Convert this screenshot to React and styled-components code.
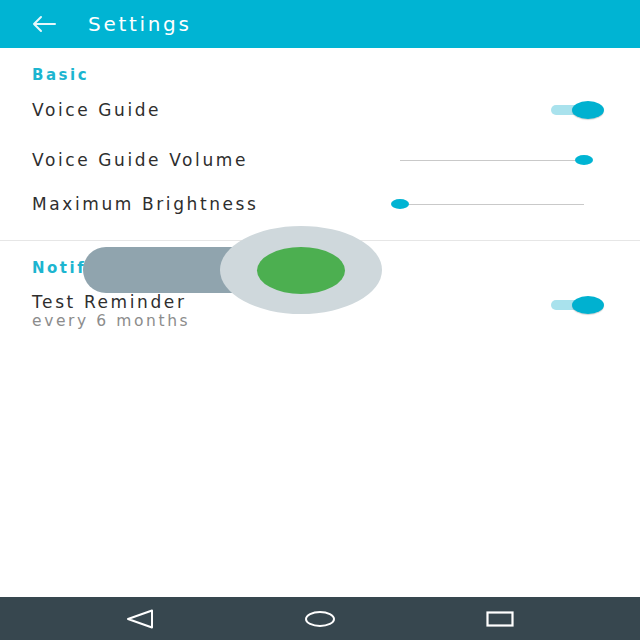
import React from 'react';
import styled, { createGlobalStyle } from 'styled-components';

const GlobalStyle = createGlobalStyle`
    html, body {
        margin: 0;
        padding: 0;
        background: #ffffff;
    }
    body {
        font-family: "DejaVu Sans", "Open Sans", sans-serif;
    }
`;

const CYAN = '#00b4d3';

const App = () => {
    return (
        <Screen>
            <GlobalStyle />
            <AppBar>
                <BackButton aria-label="back">
                    <svg width="26" height="18" viewBox="0 0 26 18">
                        <path d="M24 9H3M10 2L3 9l7 7" fill="none" stroke="#e6f7fb" strokeWidth="2" strokeLinecap="round" strokeLinejoin="round" />
                    </svg>
                </BackButton>
                <Title>Settings</Title>
            </AppBar>

            <Content>
                <Section>
                    <SectionTitle>Basic</SectionTitle>
                    <Row height={48}>
                        <Label>Voice Guide</Label>
                        <Toggle />
                    </Row>
                    <Row height={52}>
                        <Label>Voice Guide Volume</Label>
                        <Slider value={1} />
                    </Row>
                    <Row height={36}>
                        <Label>Maximum Brightness</Label>
                        <Slider value={0} />
                    </Row>
                </Section>

                <Divider />

                <Section>
                    <SectionTitle>Notifications</SectionTitle>
                    <Row height={52}>
                        <TextBlock>
                            <Label>Test Reminder</Label>
                            <SubLabel>every 6 months</SubLabel>
                        </TextBlock>
                        <Toggle />
                    </Row>
                </Section>

                <DragGhost>
                    <GhostTrack />
                    <GhostHalo>
                        <GhostThumb />
                    </GhostHalo>
                </DragGhost>
            </Content>

            <NavBar>
                <NavButton aria-label="back">
                    <svg width="28" height="20" viewBox="0 0 28 20">
                        <path d="M26 1.5L2 10l24 8.5z" fill="none" stroke="#ffffff" strokeWidth="2" strokeLinejoin="round" />
                    </svg>
                </NavButton>
                <NavButton aria-label="home">
                    <svg width="32" height="18" viewBox="0 0 32 18">
                        <ellipse cx="16" cy="9" rx="14" ry="7" fill="none" stroke="#ffffff" strokeWidth="2" />
                    </svg>
                </NavButton>
                <NavButton aria-label="recents">
                    <svg width="28" height="16" viewBox="0 0 28 16">
                        <rect x="1.5" y="1.5" width="25" height="13" fill="none" stroke="#ffffff" strokeWidth="2.2" />
                    </svg>
                </NavButton>
            </NavBar>
        </Screen>
    );
};

const Toggle = () => (
    <ToggleWrap>
        <ToggleTrack />
        <ToggleThumb />
    </ToggleWrap>
);

const Slider = ({ value }) => (
    <SliderWrap>
        <SliderTrack />
        <SliderThumb style={{ left: `${value * 100}%` }} />
    </SliderWrap>
);

export default App;

// Styled components
const Screen = styled.div`
    width: 640px;
    height: 640px;
    display: flex;
    flex-direction: column;
    background: #ffffff;
    overflow: hidden;
`;

const AppBar = styled.header`
    height: 48px;
    flex-shrink: 0;
    background: ${CYAN};
    display: flex;
    align-items: center;
    padding-left: 31px;
`;

const BackButton = styled.div`
    width: 26px;
    height: 18px;
    display: flex;
    margin-right: 31px;
`;

const Title = styled.h1`
    margin: 0;
    color: #ffffff;
    font-size: 20px;
    font-weight: normal;
    letter-spacing: 2.7px;
    line-height: 24px;
`;

const Content = styled.main`
    position: relative;
    flex: 1;
`;

const Section = styled.section`
    padding-top: 16px;
    padding-bottom: 18px;
`;

const SectionTitle = styled.h2`
    margin: 0;
    padding-left: 32px;
    height: 22px;
    line-height: 22px;
    color: #1cb5d0;
    font-size: 15px;
    font-weight: bold;
    letter-spacing: 2.5px;
`;

const Row = styled.div`
    height: ${p => p.height}px;
    display: flex;
    align-items: center;
    justify-content: space-between;
    padding: 0 36px 0 32px;
`;

const Label = styled.div`
    color: #2e2e2e;
    font-size: 17px;
    letter-spacing: 2.6px;
    line-height: 20px;
`;

const TextBlock = styled.div`
    display: flex;
    flex-direction: column;
    margin-top: 12px;
`;

const SubLabel = styled.div`
    color: #8c8c8c;
    font-size: 15.5px;
    letter-spacing: 2.6px;
    line-height: 18px;
`;

const ToggleWrap = styled.div`
    position: relative;
    width: 53px;
    height: 18px;
`;

const ToggleTrack = styled.div`
    position: absolute;
    left: 0;
    top: 4px;
    width: 40px;
    height: 10px;
    border-radius: 5px;
    background: #a9e2ed;
`;

const ToggleThumb = styled.div`
    position: absolute;
    right: 0;
    top: 0;
    width: 32px;
    height: 18px;
    border-radius: 50%;
    background: #00b1d0;
    box-shadow: 0 1px 1px rgba(0, 0, 0, 0.18);
`;

const SliderWrap = styled.div`
    position: relative;
    width: 184px;
    height: 12px;
    margin-right: 20px;
`;

const SliderTrack = styled.div`
    position: absolute;
    left: 0;
    right: 0;
    top: 5.5px;
    height: 1px;
    background: #c9c9c9;
`;

const SliderThumb = styled.div`
    position: absolute;
    top: 1px;
    width: 18px;
    height: 10px;
    margin-left: -9px;
    border-radius: 50%;
    background: ${CYAN};
`;

const Divider = styled.hr`
    margin: 0;
    border: none;
    border-top: 1px solid #e6e6e6;
`;

const DragGhost = styled.div`
    position: absolute;
    left: 83px;
    top: 178px;
    width: 299px;
    height: 88px;
`;

const GhostTrack = styled.div`
    position: absolute;
    left: 0;
    top: 21px;
    width: 200px;
    height: 46px;
    border-radius: 23px;
    background: #90a4ae;
`;

const GhostHalo = styled.div`
    position: absolute;
    right: 0;
    top: 0;
    width: 162px;
    height: 88px;
    border-radius: 50%;
    background: #cfd8dc;
    display: flex;
    align-items: center;
    justify-content: center;
`;

const GhostThumb = styled.div`
    width: 88px;
    height: 47px;
    border-radius: 50%;
    background: #4caf50;
`;

const NavBar = styled.nav`
    height: 43px;
    flex-shrink: 0;
    background: #37474f;
    display: grid;
    grid-template-columns: repeat(3, 180px);
    align-items: center;
    padding-left: 50px;
`;

const NavButton = styled.div`
    display: flex;
    justify-content: center;
`;
